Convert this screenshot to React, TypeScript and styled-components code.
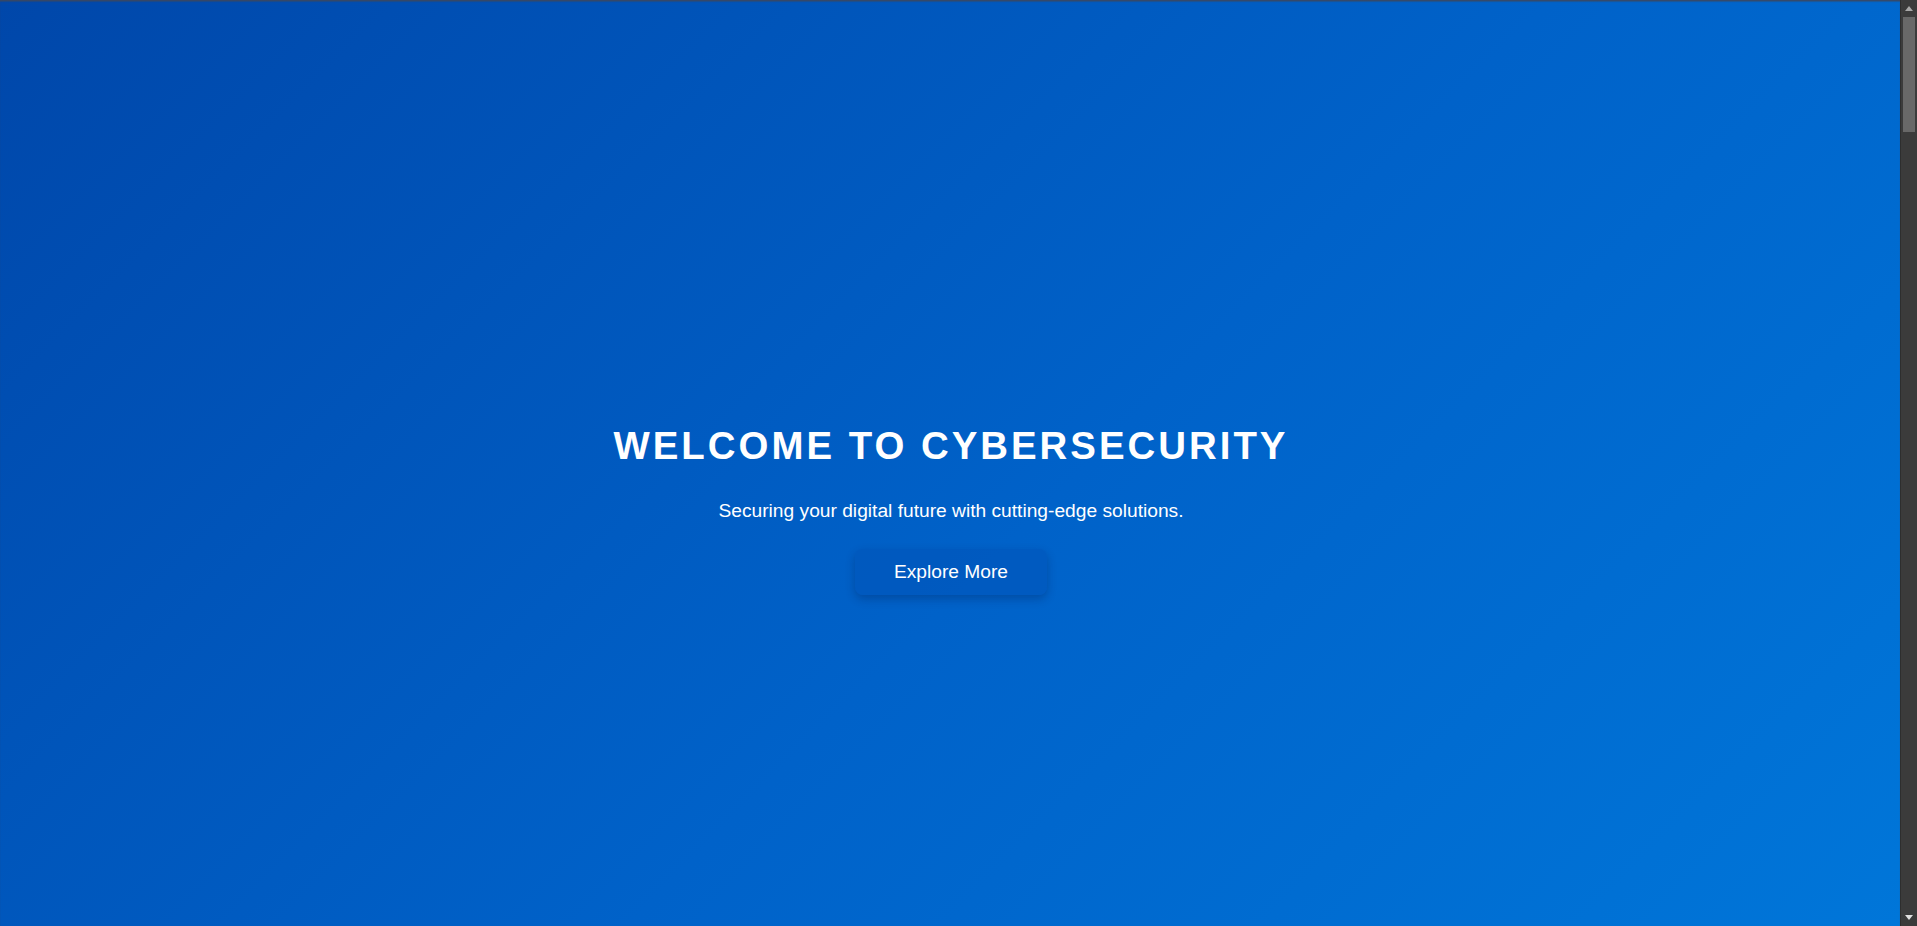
import React from "react";
import styled, { createGlobalStyle } from "styled-components";

const GlobalStyle = createGlobalStyle`
  html, body { margin: 0; padding: 0; overflow: hidden; }
  body {
    font-family: "Liberation Sans", Arial, sans-serif;
    background: #0a3f8f;
    color: #ffffff;
  }
  * { box-sizing: border-box; }
`;

const Page = styled.div`
  display: grid;
  grid-template-columns: 1fr 17px;
  height: 100vh;
`;

const Hero = styled.section`
  height: 100vh;
  display: flex;
  flex-direction: column;
  align-items: center;
  justify-content: center;
  padding: 93px 0 0 2px;
  background: linear-gradient(135deg, #0047aa 0%, #0062c9 55%, #0076d9 100%);
  box-shadow: inset 0 2px 1px -0.5px rgba(58, 72, 96, 0.95);
  text-align: center;
`;

const Title = styled.h1`
  margin: 0 0 32px;
  font-size: 38.4px;
  line-height: 44px;
  font-weight: 700;
  letter-spacing: 3px;
  text-transform: uppercase;
  color: #ffffff;
`;

const Subtitle = styled.p`
  margin: 0 0 27px;
  font-size: 19.2px;
  line-height: 22px;
  color: #ffffff;
`;

const Button = styled.button`
  font-family: "Liberation Sans", Arial, sans-serif;
  font-size: 19.2px;
  line-height: 22px;
  padding: 12px 39px;
  border: none;
  border-radius: 8px;
  color: #ffffff;
  background: rgba(0, 84, 184, 0.55);
  box-shadow: 0 4px 10px rgba(0, 20, 70, 0.28);
  cursor: pointer;
`;

const Scrollbar = styled.div`
  display: grid;
  grid-template-rows: 17px 1fr 17px;
  background: #3b3b3b;
  border-left: 1px solid #2e2e2e;
`;

const Arrow = styled.div`
  display: flex;
  align-items: center;
  justify-content: center;
  color: #a8a8a8;
`;

const Track = styled.div`
  display: flex;
  flex-direction: column;
  padding: 0 2px;
`;

const Thumb = styled.div`
  height: 115px;
  background: #686868;
`;

export default function App() {
  return (
    <>
      <GlobalStyle />
      <Page>
        <Hero>
          <Title>Welcome to Cybersecurity</Title>
          <Subtitle>Securing your digital future with cutting-edge solutions.</Subtitle>
          <Button>Explore More</Button>
        </Hero>
        <Scrollbar aria-hidden="true">
          <Arrow>
            <svg width="8" height="5" viewBox="0 0 8 5">
              <polygon points="4,0 8,5 0,5" fill="currentColor" />
            </svg>
          </Arrow>
          <Track>
            <Thumb />
          </Track>
          <Arrow>
            <svg width="8" height="5" viewBox="0 0 8 5">
              <polygon points="0,0 8,0 4,5" fill="#e0e0e0" />
            </svg>
          </Arrow>
        </Scrollbar>
      </Page>
    </>
  );
}
